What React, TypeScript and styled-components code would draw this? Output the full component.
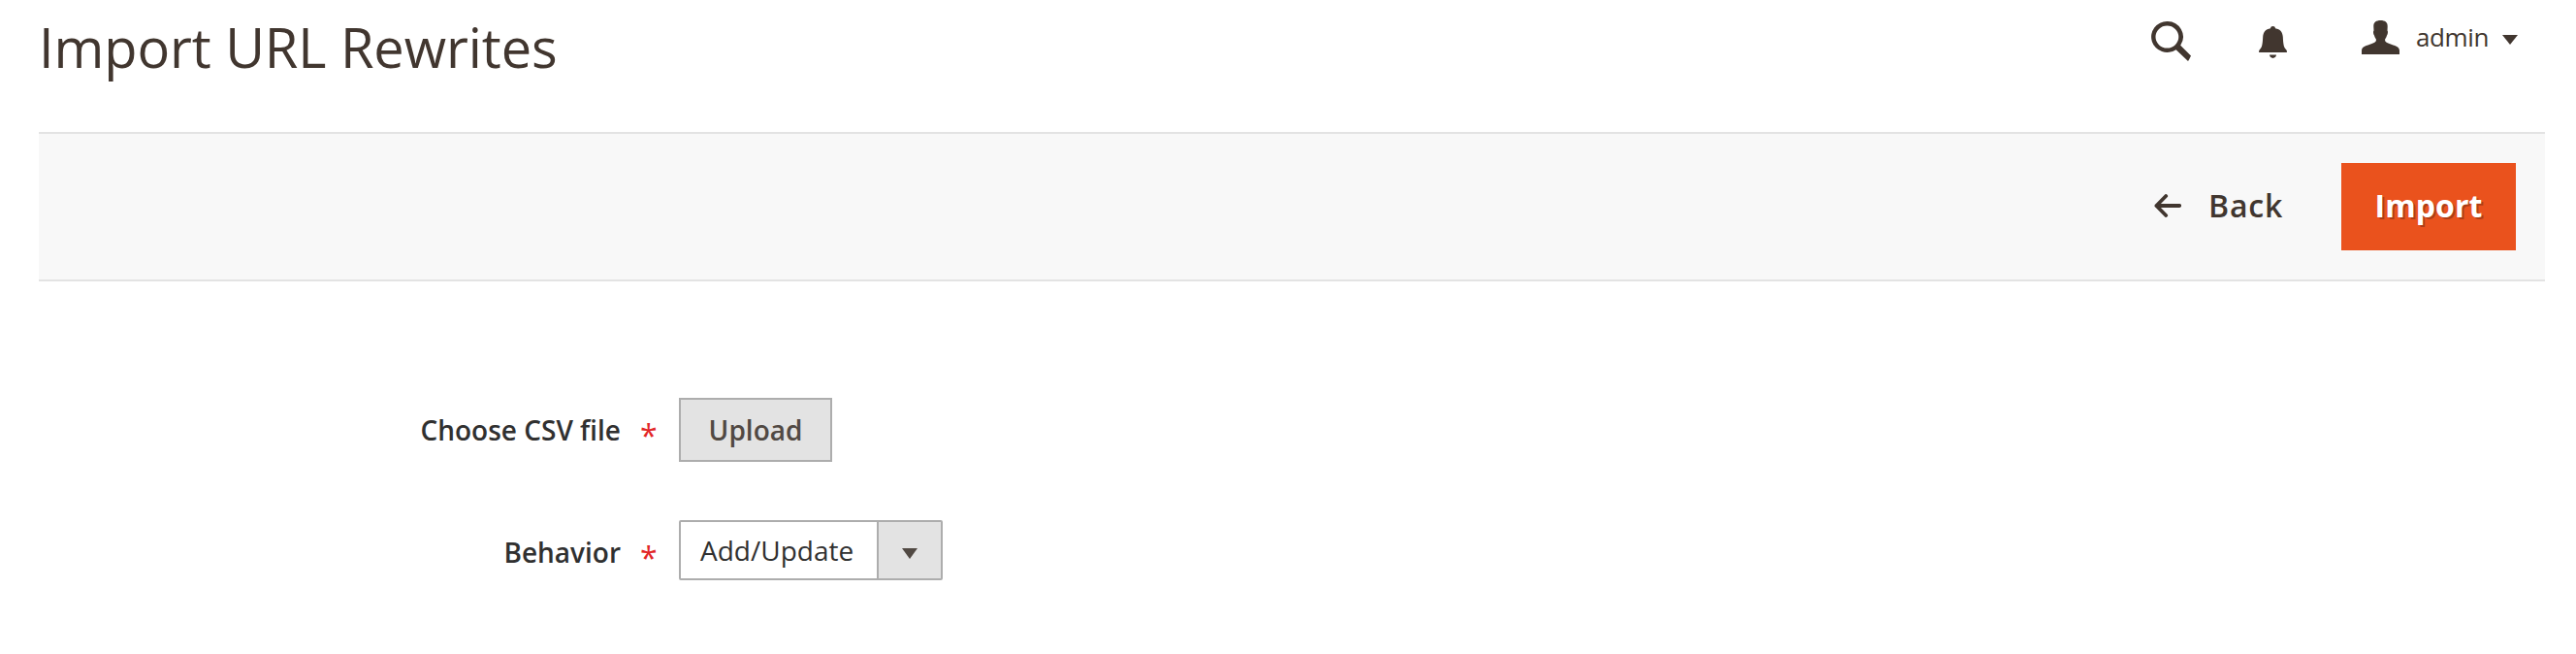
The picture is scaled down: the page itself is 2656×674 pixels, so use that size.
import React from "react";
import styled, { createGlobalStyle } from "styled-components";

const Global = createGlobalStyle`
  * { box-sizing: border-box; }
  body {
    margin: 0;
    background: #fff;
    color: #303030;
    font-family: "Open Sans", "Noto Sans", sans-serif;
    font-size: 28px;
  }
`;

const Page = styled.div`
  height: 674px;
  padding: 0 32px 0 40px;
  overflow: hidden;
`;

const Header = styled.header`
  display: flex;
  justify-content: space-between;
  height: 136px;
`;

const Title = styled.h1`
  margin: 10px 0 0;
  font-size: 56px;
  line-height: 76px;
  font-weight: 400;
  letter-spacing: -0.1px;
  color: #41362f;
  white-space: nowrap;
`;

const Tools = styled.div`
  display: flex;
  align-items: flex-start;
  padding-right: 28px;
  color: #41362f;
`;

const ToolIcon = styled.svg<{ $top: number; $right: number }>`
  display: block;
  flex: none;
  fill: currentColor;
  margin-top: ${(p) => p.$top}px;
  margin-right: ${(p) => p.$right}px;
`;

const UserName = styled.span`
  width: 89px;
  margin-top: 20px;
  font-size: 26px;
  line-height: 36px;
  letter-spacing: -0.4px;
`;

const ActionBar = styled.div`
  display: flex;
  align-items: center;
  justify-content: flex-end;
  height: 154px;
  padding-right: 30px;
  background: #f8f8f8;
  border-top: 2px solid #e3e3e3;
  border-bottom: 2px solid #e3e3e3;
`;

const BarButton = styled.button`
  display: flex;
  align-items: center;
  height: 90px;
  border: 0;
  padding: 0 0 2px;
  font: 600 32px/44px "Open Sans", "Noto Sans", sans-serif;
  letter-spacing: 0.8px;
  white-space: nowrap;
`;

const BackButton = styled(BarButton)`
  width: 193px;
  background: transparent;
  color: #41362f;
`;

const BackArrow = styled.svg`
  display: block;
  flex: none;
  margin-right: 28px;
`;

const PrimaryButton = styled(BarButton)`
  justify-content: center;
  width: 180px;
  background: #ea521d;
  color: #fff;
  font-weight: 700;
  letter-spacing: 0.1px;
  text-shadow: 2px 2px 0 rgba(0, 0, 0, 0.25);
`;

const Form = styled.form`
  display: flex;
  flex-direction: column;
  gap: 60px;
  padding-top: 120px;
`;

const Field = styled.div`
  display: flex;
`;

const Label = styled.label`
  width: 600px;
  padding-top: 14px;
  text-align: right;
  font-weight: 600;
  line-height: 38px;
  white-space: nowrap;
`;

const Required = styled.span`
  width: 60px;
  padding: 17px 0 0 20px;
  color: #e22626;
  font-size: 32px;
  font-weight: 500;
  line-height: 44px;
`;

const UploadButton = styled.button`
  width: 158px;
  height: 66px;
  padding: 0;
  border: 2px solid #adadad;
  background: #e3e3e3;
  color: #514943;
  font: 600 28px/38px "Open Sans", "Noto Sans", sans-serif;
`;

const Select = styled.div`
  display: flex;
  width: 272px;
  height: 62px;
  border: 2px solid #adadad;
  border-radius: 2px;
  background: #fff;
`;

const SelectValue = styled.span`
  flex: 1;
  padding: 10px 0 0 20px;
  line-height: 38px;
  white-space: nowrap;
`;

const SelectToggle = styled.span`
  display: flex;
  justify-content: center;
  width: 66px;
  padding-top: 27px;
  border-left: 2px solid #adadad;
  background: #e3e3e3;
  color: #514943;
`;

const Caret = styled.svg`
  display: block;
  flex: none;
  fill: currentColor;
`;

const HeaderCaret = styled(Caret)`
  margin-top: 36px;
`;

export default function App() {
  return (
    <>
      <Global />
      <Page>
        <Header>
          <Title>Import URL Rewrites</Title>
          <Tools>
            <ToolIcon $top={22} $right={70} width="41" height="41" viewBox="0 0 41 41">
              <path
                fillRule="evenodd"
                d="M16.400 0a16.300 16 0 1 0 9.200 29.200L38 41L39 39.500L41 35.500L30.200 24.800A16.300 16 0 0 0 16.400 0ZM16.400 4.600a11.900 11.500 0 1 1 0 23a11.900 11.500 0 1 1 0 -23Z"
              />
            </ToolIcon>
            <ToolIcon $top={27} $right={77} width="29" height="34" viewBox="0 0 29 34">
              <path d="M14.500 0C16 0 16.800 .8 17 2.200C22 3 24.500 6 24.800 11C25.200 18 25.500 21.500 28 24C29 25 29.400 27 28.500 27H.5C-.4 27 0 25 1 24C3.500 21.500 3.800 18 4.200 11C4.500 6 7 3 12 2.200C12.200 .8 13 0 14.500 0ZM11 29.600H18C17.600 34 11.400 34 11 29.600Z" />
            </ToolIcon>
            <ToolIcon $top={21} $right={17} width="39" height="35" viewBox="0 0 39 35">
              <path d="M19.500 0C24 0 27 2 26.700 6.500L26.500 10.500C27.500 11.500 26.800 14.500 26 15.500C25.500 18 24.200 18.500 24 20C24 22.500 26 23 28.500 24C34 26 39 27 39 31V35H0V31C0 27 5 26 10.500 24C13 23 15 22.500 15 20C14.800 18.500 13.500 18 13 15.500C12.200 14.500 11.500 11.500 12.500 10.500L12.300 6.500C12 2 15 0 19.500 0Z" />
            </ToolIcon>
            <UserName>admin</UserName>
            <HeaderCaret width="16" height="10" viewBox="0 0 16 10">
              <path d="M0 0H16L8 10Z" />
            </HeaderCaret>
          </Tools>
        </Header>
        <ActionBar>
          <BackButton type="button">
            <BackArrow width="28" height="24" viewBox="0 0 28 24">
              <path
                d="M26.200 12H2.400M12.200 2L2.400 12L12.200 22"
                fill="none"
                stroke="currentColor"
                strokeWidth="3.800"
                strokeLinecap="round"
                strokeLinejoin="round"
              />
            </BackArrow>
            Back
          </BackButton>
          <PrimaryButton type="button">Import</PrimaryButton>
        </ActionBar>
        <Form>
          <Field>
            <Label>Choose CSV file</Label>
            <Required>*</Required>
            <UploadButton type="button">Upload</UploadButton>
          </Field>
          <Field>
            <Label>Behavior</Label>
            <Required>*</Required>
            <Select>
              <SelectValue>Add/Update</SelectValue>
              <SelectToggle>
                <Caret width="16" height="11" viewBox="0 0 16 11">
                  <path d="M0 0H16L8 11Z" />
                </Caret>
              </SelectToggle>
            </Select>
          </Field>
        </Form>
      </Page>
    </>
  );
}
